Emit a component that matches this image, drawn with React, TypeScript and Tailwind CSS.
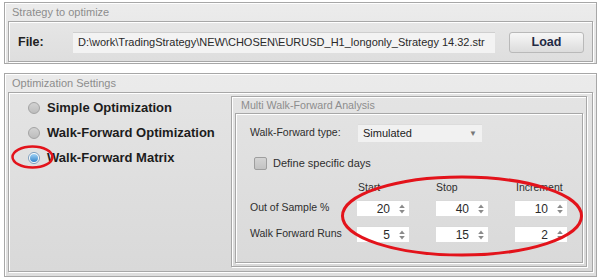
import React from 'react';

const font = { fontFamily: '"Liberation Sans", Arial, sans-serif' };

const Radio = ({ checked, label }: { checked?: boolean; label: string }) => (
  <div className="flex items-center h-[25px]">
    <span
      className={`ml-[19px] w-[12px] h-[12px] rounded-full border flex items-center justify-center ${
        checked ? 'border-[#7a9cbc] bg-white' : 'border-[#a3a3a3] bg-gradient-to-b from-[#d2d2d2] to-[#bdbdbd]'
      }`}
    >
      {checked && <span className="w-[8px] h-[8px] rounded-full bg-gradient-to-b from-[#9fd2f5] to-[#2f84c9]" />}
    </span>
    <span className="ml-[7px] text-[13px] font-bold text-[#1c1c1c]">{label}</span>
  </div>
);

const Spinner = ({ value }: { value: number }) => (
  <div className="w-[52px] h-[16px] bg-white border-t border-[#d9d9d9] flex items-center justify-end">
    <span className="text-[12px] text-[#2a2a2a] leading-none">{value}</span>
    <svg width="6" height="10" viewBox="0 0 6 10" className="ml-[9px] mr-[4px]">
      <path d="M3 0.5 L5.8 4 L0.2 4 Z" fill="#8a8a8a" />
      <path d="M3 9.5 L5.8 6 L0.2 6 Z" fill="#8a8a8a" />
    </svg>
  </div>
);

const Etched = 'border border-[#a7a7a7] shadow-[inset_1px_1px_0_#ffffff,1px_1px_0_#ffffff]';

export default function App() {
  return (
    <div className="relative w-[602px] h-[280px] bg-white pt-[2px] pl-[4px]" style={font}>
      {/* Strategy to optimize */}
      <div className={`w-[593px] h-[62px] bg-gradient-to-b from-[#ececec] to-[#e3e3e3] ${Etched} flex flex-col`}>
        <div className="h-[18px] pl-[7px] flex items-center text-[11px] text-[#8d8d8d]">Strategy to optimize</div>
        <div className={`mx-[3px] h-[41px] ${Etched} bg-gradient-to-b from-[#e6e6e6] to-[#dedede] flex items-center pt-[1px]`}>
          <span className="ml-[9px] w-[55px] text-[12.5px] font-bold text-[#222]">File:</span>
          <div className="w-[422px] h-[21px] bg-[#f3f3f3] border-t border-[#cfcfcf] flex items-center pl-[5px] text-[11px] text-[#2a2a2a] whitespace-nowrap">
            D:\work\TradingStrategy\NEW\CHOSEN\EURUSD_H1_longonly_Strategy 14.32.str
          </div>
          <button className="ml-[14px] w-[75px] h-[21px] rounded-[3px] border border-[#b9b9b9] bg-gradient-to-b from-[#f7f7f7] to-[#dcdcdc] text-[12.5px] font-bold text-[#1f2a44]">
            Load
          </button>
        </div>
      </div>

      {/* Optimization Settings */}
      <div className={`mt-[9px] w-[593px] h-[204px] bg-gradient-to-b from-[#ebebeb] to-[#dedede] ${Etched} flex flex-col`}>
        <div className="h-[18px] pl-[7px] flex items-center text-[11px] text-[#8d8d8d]">Optimization Settings</div>
        <div className={`mx-[3px] h-[180px] ${Etched} bg-gradient-to-b from-[#e4e4e4] to-[#d9d9d9] flex`}>
          <div className="w-[222px] pt-[2px]">
            <Radio label="Simple Optimization" />
            <Radio label="Walk-Forward Optimization" />
            <Radio checked label="Walk-Forward Matrix" />
          </div>
          <div className={`mt-[3px] w-[356px] h-[171px] ${Etched} flex flex-col`}>
            <div className="h-[16px] pl-[9px] flex items-center text-[10.7px] text-[#8d8d8d]">Multi Walk-Forward Analysis</div>
            <div className={`mx-[3px] h-[150px] ${Etched} flex flex-col text-[10.5px] text-[#2e2e2e]`}>
              <div className="mt-[10px] flex items-center h-[18px]">
                <span className="ml-[14px] w-[108px]">Walk-Forward type:</span>
                <div className="w-[124px] h-[18px] bg-[#f1f1f1] border-t border-[#dcdcdc] flex items-center justify-between pl-[5px] pr-[5px] text-[11px] text-[#222]">
                  <span>Simulated</span>
                  <span className="text-[8px] text-[#777]">▼</span>
                </div>
              </div>
              <div className="mt-[14px] flex items-center h-[14px]">
                <span className="ml-[18px] w-[13px] h-[13px] rounded-[2px] border border-[#9e9e9e] bg-gradient-to-b from-[#d4d4d4] to-[#c2c2c2]" />
                <span className="ml-[6px] text-[11px]">Define specific days</span>
              </div>
              <div className="mt-[10px] ml-[14px] grid grid-cols-[80px_52px_52px_52px] gap-x-[27px] items-center">
                <span />
                <span className="pl-[1px] h-[14px] leading-[14px]">Start</span>
                <span className="h-[14px] leading-[14px]">Stop</span>
                <span className="pl-[1px] h-[14px] leading-[14px]">Increment</span>
                <span className="mt-[6px] whitespace-nowrap">Out of Sample %</span>
                <div className="mt-[6px]"><Spinner value={20} /></div>
                <div className="mt-[6px]"><Spinner value={40} /></div>
                <div className="mt-[6px]"><Spinner value={10} /></div>
                <span className="mt-[10px] whitespace-nowrap">Walk Forward Runs</span>
                <div className="mt-[10px]"><Spinner value={5} /></div>
                <div className="mt-[10px]"><Spinner value={15} /></div>
                <div className="mt-[10px]"><Spinner value={2} /></div>
              </div>
            </div>
          </div>
        </div>
      </div>

      {/* red annotation marks */}
      <svg className="absolute left-0 top-0 pointer-events-none" width="602" height="280">
        <ellipse cx="32.5" cy="157" rx="20" ry="10.5" fill="none" stroke="#e3131b" strokeWidth="2.5" />
        <ellipse cx="462" cy="216" rx="119.5" ry="39" fill="none" stroke="#e3131b" strokeWidth="3" />
      </svg>
    </div>
  );
}
